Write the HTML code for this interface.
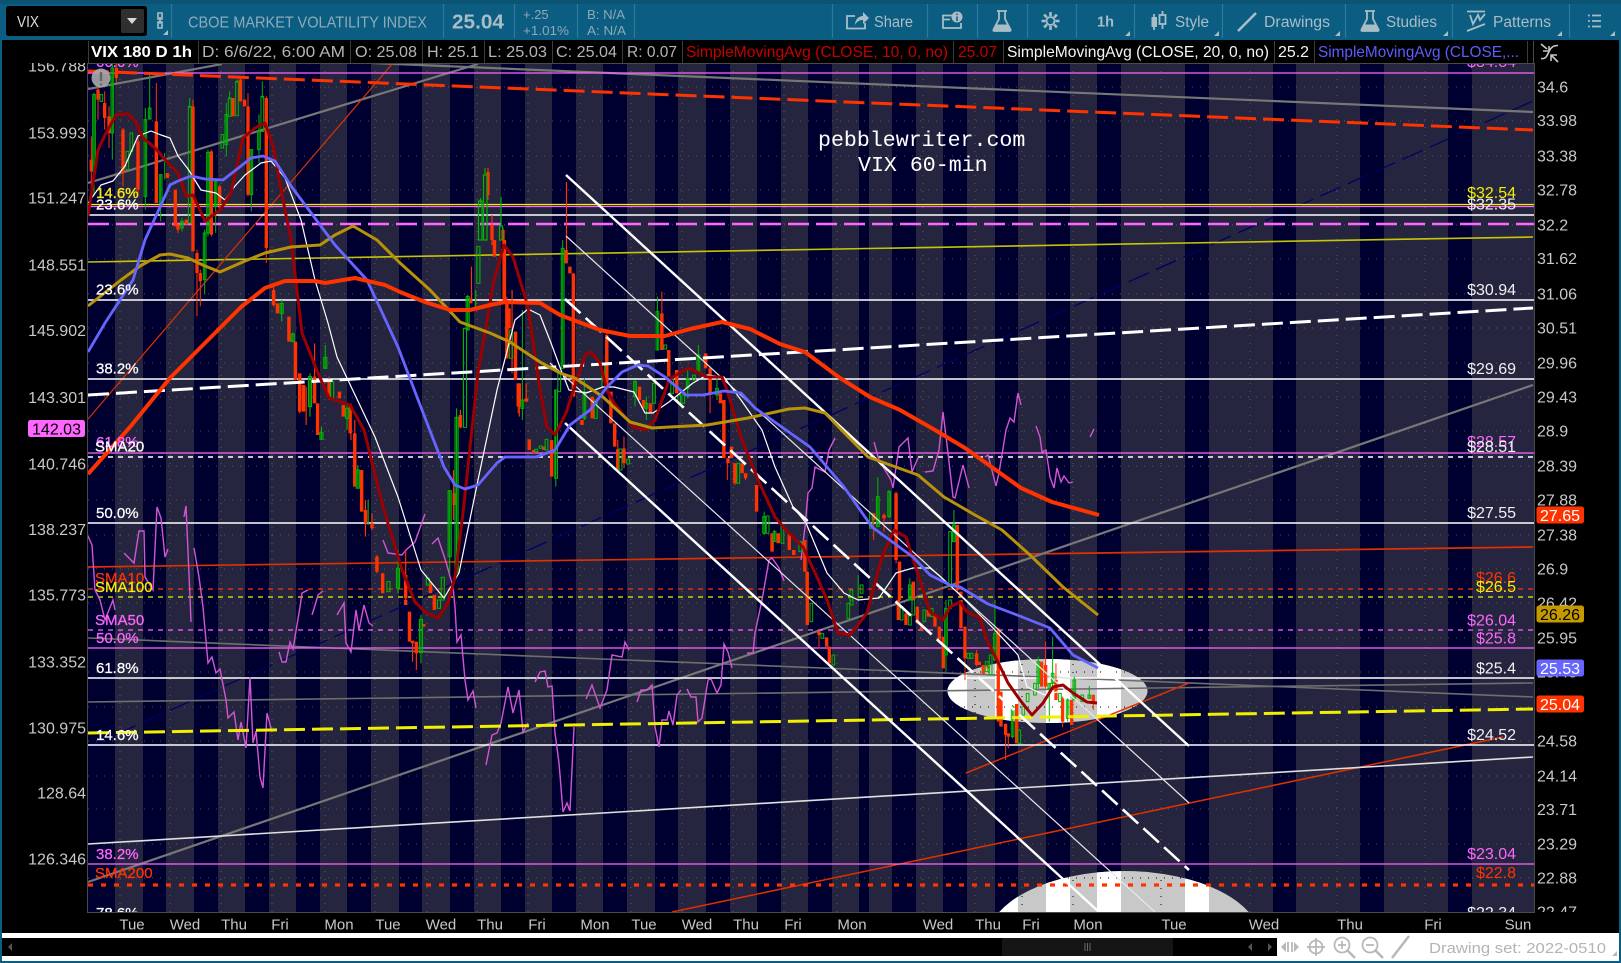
<!DOCTYPE html>
<html><head><meta charset="utf-8"><title>VIX</title>
<style>
html,body{margin:0;padding:0;background:#000;width:1621px;height:963px;overflow:hidden}
svg{display:block}
text{font-family:"Liberation Sans",sans-serif}
.ax{font-size:16px;fill:#c8c8c8}
.t{font-size:15px;fill:#c8c8c8}
.fw{font-size:15px;fill:#fff;stroke:#fff;stroke-width:.25}.fp{font-size:15px;fill:#ff66ff;stroke:#ff66ff;stroke-width:.25}.fy{font-size:15px;fill:#f0f000;stroke:#f0f000;stroke-width:.25}.fr{font-size:15px;fill:#ff3300;stroke:#ff3300;stroke-width:.25}
.dw{font-size:16px;fill:#f0f0f0;text-anchor:end}.dp{font-size:16px;fill:#ff66ff;text-anchor:end}.dy{font-size:16px;fill:#f0f000;text-anchor:end}.dr{font-size:16px;fill:#ff3300;text-anchor:end}
.h{font-size:15.8px;fill:#b4b4b4}
.tb{font-size:15.5px;fill:#a9bdc7}
.m{font-family:"Liberation Mono",monospace;font-size:21.6px;fill:#fff}
.box{font-size:16px}
</style></head><body>
<svg width="1621" height="963" viewBox="0 0 1621 963" xmlns="http://www.w3.org/2000/svg">
<defs>
<path id="db" d="M88 63h27v849h-27zM143 63h23v849h-23zM194 63h24v849h-24zM245 63h24v849h-24zM296 63h24v849h-24zM347 63h24v849h-24zM399 63h23v849h-23zM450 63h24v849h-24zM501 63h24v849h-24zM552 63h24v849h-24zM603 63h24v849h-24zM655 63h23v849h-23zM706 63h24v849h-24zM757 63h24v849h-24zM808 63h24v849h-24zM859 63h10v849h-10zM892 63h24v849h-24zM943 63h24v849h-24zM995 63h23v849h-23zM1046 63h24v849h-24zM1097 63h24v849h-24zM1185 63h24v849h-24zM1273 63h23v849h-23zM1360 63h24v849h-24zM1448 63h24v849h-24z"/>
<clipPath id="pl"><rect x="88" y="63" width="1446" height="849"/></clipPath>
<clipPath id="el"><ellipse cx="1047.5" cy="691" rx="100" ry="32"/><ellipse cx="1124" cy="941" rx="137" ry="70"/></clipPath>
<clipPath id="rax"><rect x="1535" y="64" width="84" height="848"/></clipPath>
</defs>

<!-- frame -->
<rect width="1621" height="963" fill="#0b5d82"/>
<rect x="2" y="40" width="1617" height="893" fill="#000"/>

<!-- plot -->
<g clip-path="url(#pl)">
<rect x="88" y="63" width="1446" height="849" fill="#25253f"/>
<use href="#db" fill="#000030"/>
<!-- dotted grid -->
<path stroke="#8a8a70" stroke-opacity=".55" stroke-width="1" stroke-dasharray="1 7" fill="none" d="M88 87H1534M88 121H1534M88 156H1534M88 190H1534M88 225H1534M88 259H1534M88 294H1534M88 328H1534M88 363H1534M88 397H1534M88 431H1534M88 466H1534M88 500H1534M88 535H1534M88 569H1534M88 603H1534M88 638H1534M88 672H1534M88 707H1534M88 741H1534M88 776H1534M88 809H1534M88 844H1534M88 878H1534M120 63V912M170 63V912M221 63V912M272 63V912M325 63V912M375 63V912M427 63V912M477 63V912M528 63V912M580 63V912M631 63V912M682 63V912M733 63V912M784 63V912M837 63V912M923 63V912M975 63V912M1022 63V912M1073 63V912M1161 63V912M1250 63V912M1337 63V912M1425 63V912"/>
<!-- ellipses -->
<g clip-path="url(#el)">
<rect x="900" y="640" width="400" height="280" fill="#c8c8c8"/>
<use href="#db" fill="#fff"/>
<path stroke="#000" stroke-width="1" stroke-dasharray="1 7" fill="none" d="M900 672H1200M900 707H1200M900 878H1300M975 640V920M1022 640V920M1073 640V920M1161 640V920"/>
</g>
<!-- thin sloped lines -->
<g fill="none">
<path d="M88 747L1533 101" stroke="#000066" stroke-width="1.3" stroke-dasharray="22 8"/>
<path d="M88 262L1533 237" stroke="#d8d800" stroke-width="1.6" stroke-opacity=".9"/>
<path d="M88 567L1533 547" stroke="#e03000" stroke-width="1.7"/>
<path d="M88 638L1533 697" stroke="#6e6e6e" stroke-width="1.6"/>
<path d="M88 702L1533 683" stroke="#6e6e6e" stroke-width="1.6"/>
<path d="M372 63L1533 112" stroke="#777" stroke-width="2.2"/>
<path d="M88 89L222 64" stroke="#777" stroke-width="2.2"/>
<path d="M88 183L478 64" stroke="#777" stroke-width="2.2"/>
<path d="M88 882L1533 385" stroke="#777" stroke-width="2.2"/>
<path d="M88 419L393 63" stroke="#e03000" stroke-width="1.2"/>
<path d="M672 912L1503 737" stroke="#e03000" stroke-width="1.5"/>
<path d="M966 773L1189 683" stroke="#e03000" stroke-width="1.5"/>
<path d="M88 844L1533 757" stroke="#e0e0e0" stroke-width="1.6"/>
</g>
<!-- horizontals -->
<g fill="none">
<path stroke="#ff66ff" stroke-width="1.2" d="M88 73H1534M88 206.5H1534M88 453H1534M88 648H1534M88 864H1534"/>
<path stroke="#f0f000" stroke-width="1.2" d="M88 204.5H1534"/>
<path stroke="#fff" stroke-width="1.4" d="M88 215H1534M88 300H1534M88 379H1534M88 523H1534M88 678H1534M88 745H1534"/>
<path stroke="#ff66ff" stroke-width="2.4" stroke-dasharray="21 7" d="M88 224H1534"/>
<path stroke="#fff" stroke-width="1.4" stroke-dasharray="5 5" d="M88 457H1534"/>
<path stroke="#ff3300" stroke-width="1.3" stroke-dasharray="5 5" d="M88 589H1534"/>
<path stroke="#f0f000" stroke-width="1.3" stroke-dasharray="5 5" d="M88 597H1534"/>
<path stroke="#ff66ff" stroke-width="1.3" stroke-dasharray="5 5" d="M88 630H1534"/>
<path stroke="#ff3300" stroke-width="3.2" stroke-dasharray="5 8" d="M88 885H1534"/>
</g>
<!-- pink study -->
<path fill="none" stroke="#d455d4" stroke-width="1.4" d="M88 536L92 545L95 590L100 600L105 620L113 600L115 610M124 553L134 563L139 531L144 531L145 577L153 590L157 507L161 518L165 557L168 549M184 517L186 506L190 597L191 622M194 548L199 577L203 607L208 663L212 657L216 673L220 669L226 700L228 718L234 712L238 740L241 722L246 748L250 677L253 743L256 731L260 777L263 788L267 713L272 732M279 652L282 662L286 662L290 642L293 649L300 607L302 593L308 590M312 615L316 602L318 595L323 591M337 615L344 603L346 643L351 652L356 610L359 630L364 605L369 623L373 626M383 540L388 553L402 555L406 550L415 542L425 514M432 544L438 538L446 562L453 587L455 607L457 642L461 635L465 680L468 700L473 691L476 708M486 765L492 735L497 733L501 723L508 687L513 713L519 690L523 732L528 723M535 682L540 672L545 671L548 687L552 686L555 733L559 763L563 812L567 803L570 811L574 727M586 699L592 685L600 708L607 690L612 655L622 657L625 642L629 650M637 702L641 690L647 690L652 685L655 727L659 747L662 720L667 720L669 711L673 725L677 695L681 690M687 689L691 697L696 697L698 722L702 718L708 680L711 679L717 693L721 685L724 644L728 652L732 668M747 653L753 653L755 633L762 600L769 560L772 558L779 568L784 581M801 560L805 527L808 493L812 488L815 467L825 472L829 450L835 438M874 442L879 460L891 480L893 488L899 447L908 438L912 472L918 458M925 472L933 471L939 450L943 412L948 453L953 497L955 498L963 465L969 488M985 457L988 455L996 486L999 473L1006 430L1010 418L1014 422L1018 393L1021 405M1036 426L1040 437L1042 452L1046 450L1050 477L1054 488L1057 468L1061 482L1064 476L1069 483L1073 482M1090 437L1094 429"/>
<!-- candles: upper gap -->
<g fill="none">
<path stroke="#ff3300" stroke-width="1.2" d="M566.500 182V250M488 168V200M503 228V245M492 215V245"/>
<path stroke="#ff3300" stroke-width="3.300" d="M488 172V195M492 225V240M503 230V240"/>
<path stroke="#00b400" stroke-width="1.200" d="M485 168V175M501 197V226M480.500 198V203M483.500 175h3.500V240h-3.500zM478.500 201h3.500V240h-3.500zM499.500 226h3V240h-3z"/>
</g>
<!-- candles: top-left -->
<g transform="translate(88,63) scale(.3333)" fill="none">
<path stroke="#ff3300" stroke-width="3" d="M10 220V390M30 60V170M50 85V200M63 130V255M85 0V60M105 195V370M150 215V400M270 480V510M315 110V130M327 560V760M337 620V730M370 260V520M395 365V440M457 40V115M480 90V400M535 100V600M205 60V180"/>
<path stroke="#ff3300" stroke-width="10" d="M10 290V325M30 80V110M50 120V165M63 160V210M85 15V45M105 200V330M150 235V380M205 175V420M238 330V345M262 380V490M270 485V500M295 470V485M315 130V565M327 570V630M337 630V655M370 265V515M395 370V420M435 105V160M457 50V115M470 110V130M480 130V395M535 105V555M548 560V568"/>
<path stroke="#00b400" stroke-width="3" d="M18 90V400M73 0V290M172 135V440M185 30V170M218 335V475M230 270V350M350 500V695M360 260V520M383 350V510M415 120V280M425 85V110M447 50V60M490 260V445M523 55V105M513 155V300M305 105V135M282 465V505M14 95h8V325h-8zM36 95h8V115h-8zM69 15h8V210h-8zM114 265h8V320h-8zM126 210h8V265h-8zM168 170h8V400h-8zM181 135h8V168h-8zM214 335h8V420h-8zM278 475h8V495h-8zM301 130h8V480h-8zM346 510h8V650h-8zM356 268h8V510h-8zM379 355h8V430h-8zM399 215h8V255h-8zM411 155h8V245h-8zM421 105h8V160h-8zM443 55h8V158h-8zM486 260h8V395h-8zM509 205h8V260h-8zM519 100h8V205h-8z"/>
</g>
<!-- candles: left mid -->
<g transform="translate(0,240) scale(.3827 .3333)" fill="none">
<path stroke="#ff3300" stroke-width="3" d="M715 130V200M783 400V520M800 440V555M822 310V490M860 410V480M917 490V600M927 540V740M955 780V890M972 820V870M985 945V1000M1060 930V1080M1185 690V840M1203 510V565M1232 80V180M1318 0V190M1338 150V400M1357 430V530M1375 430V485M1440 600V710"/>
<path stroke="#ff3300" stroke-width="9" d="M715 150V195M725 190V220M755 230V305M772 305V420M783 400V515M793 435V515M822 410V490M830 490V585M860 420V475M887 455V475M897 495V530M915 500V580M927 580V740M945 690V815M955 810V850M972 850V865M985 950V995M1000 1000V1060M1060 1005V1075M1125 1030V1060M1135 1065V1080M1187 760V795M1203 525V562M1230 175V190M1292 0V50M1318 0V190M1330 205V265M1347 275V420M1357 430V500M1375 475V485"/>
<path stroke="#00b400" stroke-width="3" d="M736 180V245M765 278V305M810 400V530M850 315V385M840 560V598M907 495V570M935 675V745M962 780V855M1040 930V1060M1175 752V1000M1193 505V1000M1222 165V270M1243 150V210M732 190h8V220h-8zM761 282h8V305h-8zM806 410h8V500h-8zM846 352h8V385h-8zM836 578h8V598h-8zM864 425h8V475h-8zM903 505h8V535h-8zM931 690h8V745h-8zM1011 1025h8V1055h-8zM1036 985h8V1045h-8zM1114 1015h8V1035h-8zM1153 1012h8V1080h-8zM1171 752h8V950h-8zM1189 532h8V1000h-8zM1211 265h8V562h-8zM1218 170h8V270h-8zM1246 20h8V130h-8z"/>
</g>
<g transform="translate(0,600) scale(.3827 .3333)" fill="none">
<path stroke="#ff3300" stroke-width="3" d="M1078 130V185M1088 130V210"/>
<path stroke="#ff3300" stroke-width="9" d="M1060 0V15M1070 35V125M1078 122V130M1088 125V160M1107 72V80M1135 0V30"/>
<path stroke="#00b400" stroke-width="3" d="M1100 45V190M1096 58h8V158h-8zM1143 0h8V25h-8z"/>
</g>
<!-- candles: center -->
<g transform="translate(500,240) scale(.3444 .3333)" fill="none">
<path stroke="#ff3300" stroke-width="3" d="M20 170V355M53 430V520M310 280V450M342 600V690M360 590V685M470 155V330M610 380V520M660 655V720M682 670V735M713 700V720M1085 820V900M1115 820V875M1150 755V970M1328 855V1060"/>
<path stroke="#ff3300" stroke-width="10" d="M12 0V175M20 190V355M53 430V500M77 475V485M85 598V630M98 630V640M128 620V630M150 600V710M192 30V70M203 80V100M213 100V470M238 540V555M268 470V535M310 285V450M322 455V550M333 550V620M342 628V690M360 625V670M405 440V480M417 480V505M437 490V520M470 220V330M490 330V410M513 390V460M597 340V385M610 385V460M640 460V490M650 480V655M662 655V670M672 620V655M682 670V730M703 670V700M713 700V715M745 735V815M790 880V935M808 880V910M840 880V930M853 930V945M885 900V995M892 995V1080M1085 820V840M1115 825V835M1150 760V960M1160 965V1080M1200 1025V1080M1328 855V1050M1338 1055V1070"/>
<path stroke="#00b400" stroke-width="3" d="M65 210V540M162 450V740M182 0V380M245 415V540M392 420V500M425 470V540M457 170V330M545 385V475M576 315V395M630 415V480M767 815V885M797 870V905M1040 1005V1080M1097 712V860M1130 750V835M1318 810V905M1190 1015V1080M28 270h8V355h-8zM61 480h8V505h-8zM101 628h8V635h-8zM114 618h8V625h-8zM131 598h8V630h-8zM159 450h8V715h-8zM168 395h8V455h-8zM178 25h8V385h-8zM241 455h8V535h-8zM274 480h8V535h-8zM296 375h8V440h-8zM346 627h8V690h-8zM368 658h8V672h-8zM388 425h8V470h-8zM421 490h8V505h-8zM443 430h8V490h-8zM453 215h8V330h-8zM476 315h8V327h-8zM496 415h8V460h-8zM516 465h8V490h-8zM528 465h8V490h-8zM541 415h8V445h-8zM559 405h8V420h-8zM572 345h8V395h-8zM626 445h8V465h-8zM688 670h8V730h-8zM763 830h8V880h-8zM773 828h8V880h-8zM793 875h8V905h-8zM816 858h8V910h-8zM868 905h8V935h-8zM1016 1050h8V1080h-8zM1046 1035h8V1060h-8zM1073 820h8V865h-8zM1093 770h8V860h-8zM1126 755h8V830h-8zM1186 1035h8V1080h-8zM1303 875h8V1040h-8zM1314 855h8V905h-8z"/>
</g>
<g transform="translate(600,600) scale(.3333)" fill="none">
<path stroke="#ff3300" stroke-width="3" d="M657 90V145M1095 80V240M1130 150V200M1217 370V480M1225 400V445M1337 125V265M1368 190V300M1388 290V382M1480 283V330"/>
<path stroke="#ff3300" stroke-width="10" d="M622 0V75M657 95V105M680 112V140M688 140V190M895 0V60M918 40V75M952 20V70M965 80V90M985 30V50M1005 45V80M1018 80V118M1030 110V205M1083 0V85M1095 80V175M1130 160V195M1138 185V195M1150 195V222M1165 197V205M1195 85V365M1203 275V380M1217 372V405M1225 400V410M1250 312V430M1325 185V260M1337 195V260M1368 240V300M1388 295V365M1415 300V375M1480 285V310"/>
<path stroke="#00b400" stroke-width="3" d="M1038 0V215M1185 0V180M1358 110V265M1423 230V300M1468 258V295M1315 170V265M1348 250V365M1403 295V365M1238 315V415M630 10h8V65h-8zM663 100h8V115h-8zM696 165h8V195h-8zM741 10h8V55h-8zM751 0h8V15h-8zM901 20h8V60h-8zM926 45h8V75h-8zM936 0h8V45h-8zM969 30h8V65h-8zM991 25h8V50h-8zM1034 25h8V165h-8zM1046 0h8V25h-8zM1101 160h8V175h-8zM1111 160h8V175h-8zM1156 185h8V215h-8zM1168 165h8V225h-8zM1181 100h8V180h-8zM1234 320h8V410h-8zM1254 390h8V430h-8zM1266 320h8V345h-8zM1279 280h8V305h-8zM1301 250h8V285h-8zM1311 185h8V250h-8zM1344 250h8V265h-8zM1354 220h8V250h-8zM1376 280h8V305h-8zM1399 300h8V355h-8zM1419 240h8V300h-8zM1443 285h8V305h-8zM1464 285h8V295h-8z"/>
</g>
<!-- thick sloped lines -->
<g fill="none">
<path d="M88 71L1533 130" stroke="#ff3300" stroke-width="3" stroke-dasharray="21 7"/>
<path d="M88 395L1533 308" stroke="#fff" stroke-width="3" stroke-dasharray="21 7"/>
<path d="M88 733L1533 709" stroke="#f0f000" stroke-width="3" stroke-dasharray="21 7"/>
<path d="M566 175L1189 746" stroke="#fff" stroke-width="2.4"/>
<path d="M565 299L1189 870" stroke="#fff" stroke-width="2.6" stroke-dasharray="21 7"/>
<path d="M565 423L1099 912" stroke="#fff" stroke-width="2.4"/>
<path d="M566 236L1189 803" stroke="#e8e8e8" stroke-width="1.2"/>
<path d="M550 363L1155 912" stroke="#e8e8e8" stroke-width="1.2"/>
</g>
<!-- moving averages -->
<g fill="none" stroke-linejoin="round">
<path stroke="#fff" stroke-width="1.2" d="M88 203L101 185L113 181L125 166L138 136L151 131L161 135L170 138L178 156L188 169L201 190L216 193L225 200L235 186L245 175L261 163L271 161L285 178L301 220L315 280L328 323L337 357L375 437L398 497L421 570L444 598L459 573L478 480L497 390L515 320L528 309L540 315L551 343L561 370L569 390L586 393L603 387L614 387L634 392L645 413L653 413L669 402L693 383L707 375L724 377L741 400L762 430L775 467L793 507L806 523L827 573L844 593L858 600L879 598L896 573L913 568L930 568L941 577L958 593L975 610L993 628L1018 655L1027 687L1045 695L1065 690L1085 700L1098 703"/>
<path stroke="#9c0000" stroke-width="3" d="M88 216L98 150L105 135L116 115L128 114L135 121L143 138L155 148L168 163L178 173L186 196L193 195L205 221L220 210L231 193L243 138L255 128L265 123L273 146L285 210L291 240L302 333L318 373L329 398L350 405L364 430L383 507L402 570L415 602L425 612L438 618L448 603L455 577L463 513L478 373L494 280L504 245L513 257L528 307L540 390L547 427L555 435L566 413L585 355L591 352L600 363L607 390L614 403L633 427L645 430L655 420L669 380L679 373L689 368L707 377L722 377L727 390L741 437L758 480L775 517L786 530L803 547L817 577L827 600L838 633L850 635L867 613L882 557L894 530L906 537L930 612L943 620L950 607L960 602L967 612L980 618L987 640L997 660L1008 683L1020 700L1032 715L1043 703L1053 687L1063 685L1073 693L1087 702L1097 703"/>
<path stroke="#b8920a" stroke-width="3" d="M88 306L121 280L140 266L160 255L170 254L188 258L205 266L220 272L245 261L265 253L291 247L320 245L335 235L353 226L377 240L400 263L430 290L460 322L490 333L510 342L540 362L560 373L575 378L603 397L630 422L652 428L707 425L748 418L789 409L805 408L825 413L868 457L918 475L944 497L975 515L1002 530L1030 555L1063 587L1098 615"/>
<path stroke="#6666ff" stroke-width="2.8" d="M88 352L105 323L133 280L145 240L170 185L178 181L191 176L205 179L223 180L241 166L251 158L263 156L275 161L291 186L335 245L367 280L398 347L417 397L444 467L455 485L465 489L478 485L497 463L505 457L536 457L555 450L570 425L590 410L607 387L622 372L638 365L648 366L665 377L686 395L703 395L724 391L741 393L755 408L786 430L810 447L844 487L872 527L913 557L930 575L950 585L960 587L988 604L1017 615L1050 628L1073 655L1098 668"/>
<path stroke="#ff3300" stroke-width="4" d="M88 474L130 427L170 378L241 307L265 288L285 281L315 281L325 283L355 278L385 285L400 292L425 302L450 310L470 310L490 305L505 302L540 303L560 315L600 330L630 336L665 336L690 329L722 322L750 329L780 344L805 352L840 378L870 397L900 410L935 430L965 448L1000 473L1021 488L1052 502L1099 515"/>
</g>
<!-- alert circle -->
<circle cx="101" cy="78" r="9.5" fill="#aaa" fill-opacity=".9"/>
<path d="M101 72V81M101 83.5V85.5" stroke="#666" stroke-width="2.4"/>
<!-- watermark -->
<text x="818" y="146" class="m">pebblewriter.com</text>
<text x="858" y="171" class="m">VIX 60-min</text>
<!-- fib labels left -->
<text x="96" y="67" class="fp">66.6%</text>
<text x="96" y="198" class="fp">14.6%</text><text x="96" y="198" class="fy">14.6%</text>
<text x="96" y="209.5" class="fw">23.6%</text>
<text x="96" y="294.5" class="fw">23.6%</text>
<text x="96" y="373.5" class="fw">38.2%</text>
<text x="96" y="447" class="fp">61.8%</text>
<text x="95" y="451.5" class="fw">SMA20</text>
<text x="96" y="518" class="fw">50.0%</text>
<text x="95" y="583" class="fr">SMA10</text>
<text x="95" y="592" class="fy">SMA100</text>
<text x="95" y="625" class="fp">SMA50</text>
<text x="96" y="643" class="fp">50.0%</text>
<text x="96" y="673" class="fw">61.8%</text>
<text x="96" y="740" class="fw">14.6%</text>
<text x="96" y="859" class="fp">38.2%</text>
<text x="95" y="878" class="fr">SMA200</text>
<text x="96" y="918" class="fw">78.6%</text>
<!-- $ labels right -->
<text x="1516" y="67" class="dp">$34.84</text>
<text x="1516" y="198" class="dy">$32.54</text>
<text x="1516" y="209.5" class="dw">$32.35</text>
<text x="1516" y="295" class="dw">$30.94</text>
<text x="1516" y="374" class="dw">$29.69</text>
<text x="1516" y="447" class="dp">$28.57</text>
<text x="1516" y="452" class="dw">$28.51</text>
<text x="1516" y="518" class="dw">$27.55</text>
<text x="1516" y="583" class="dr">$26.6</text>
<text x="1516" y="592" class="dy">$26.5</text>
<text x="1516" y="625.5" class="dp">$26.04</text>
<text x="1516" y="643.5" class="dp">$25.8</text>
<text x="1516" y="673.5" class="dw">$25.4</text>
<text x="1516" y="740" class="dw">$24.52</text>
<text x="1516" y="859" class="dp">$23.04</text>
<text x="1516" y="878" class="dr">$22.8</text>
<text x="1516" y="918" class="dw">$22.34</text>
</g>
<!-- plot borders -->
<path d="M87.5 63V912.5H1534.5V63" stroke="#4a4a4a" stroke-width="1" fill="none"/>

<!-- left axis -->
<g class="ax" text-anchor="end">
<text x="86" y="71.5" class="ax">156.788</text>
<text x="86" y="138.5" class="ax">153.993</text>
<text x="86" y="203.5" class="ax">151.247</text>
<text x="86" y="270.5" class="ax">148.551</text>
<text x="86" y="336" class="ax">145.902</text>
<text x="86" y="403" class="ax">143.301</text>
<text x="86" y="469.5" class="ax">140.746</text>
<text x="86" y="535" class="ax">138.237</text>
<text x="86" y="600.5" class="ax">135.773</text>
<text x="86" y="667.5" class="ax">133.352</text>
<text x="86" y="733.5" class="ax">130.975</text>
<text x="86" y="798.5" class="ax">128.64</text>
<text x="86" y="864.5" class="ax">126.346</text>
</g>
<rect x="28" y="420" width="57" height="17" rx="2.5" fill="#ff66ff"/>
<text x="56.5" y="434.5" text-anchor="middle" class="box" fill="#000">142.03</text>

<!-- right axis -->
<g clip-path="url(#rax)">
<text x="1537" y="92.5" class="ax">34.6</text>
<text x="1537" y="126" class="ax">33.98</text>
<text x="1537" y="161.5" class="ax">33.38</text>
<text x="1537" y="195.5" class="ax">32.78</text>
<text x="1537" y="230.5" class="ax">32.2</text>
<text x="1537" y="264" class="ax">31.62</text>
<text x="1537" y="299.5" class="ax">31.06</text>
<text x="1537" y="333.5" class="ax">30.51</text>
<text x="1537" y="368.5" class="ax">29.96</text>
<text x="1537" y="402.5" class="ax">29.43</text>
<text x="1537" y="436.5" class="ax">28.9</text>
<text x="1537" y="471.5" class="ax">28.39</text>
<text x="1537" y="505.5" class="ax">27.88</text>
<text x="1537" y="540.5" class="ax">27.38</text>
<text x="1537" y="574.5" class="ax">26.9</text>
<text x="1537" y="608.5" class="ax">26.42</text>
<text x="1537" y="643.5" class="ax">25.95</text>
<text x="1537" y="677.5" class="ax">25.48</text>
<text x="1537" y="746.5" class="ax">24.58</text>
<text x="1537" y="781.5" class="ax">24.14</text>
<text x="1537" y="815" class="ax">23.71</text>
<text x="1537" y="849.5" class="ax">23.29</text>
<text x="1537" y="883.5" class="ax">22.88</text>
<text x="1537" y="917.5" class="ax">22.47</text>
</g>
<rect x="1536.5" y="506.5" width="47.5" height="17" rx="2.5" fill="#ff3300"/><text x="1540" y="521" class="box" fill="#fff">27.65</text>
<rect x="1536.5" y="605.5" width="47.5" height="17" rx="2.5" fill="#c49a00"/><text x="1540" y="620" class="box" fill="#000">26.26</text>
<rect x="1536.5" y="659.5" width="47.5" height="17" rx="2.5" fill="#6666ff"/><text x="1540" y="674" class="box" fill="#fff">25.53</text>
<rect x="1536.5" y="695.5" width="47.5" height="17" rx="2.5" fill="#ff3300"/><text x="1540" y="710" class="box" fill="#fff">25.04</text>

<!-- time axis -->
<g text-anchor="middle">
<text x="132" y="929.5" class="t">Tue</text><text x="185" y="929.5" class="t">Wed</text><text x="234" y="929.5" class="t">Thu</text><text x="280" y="929.5" class="t">Fri</text><text x="339" y="929.5" class="t">Mon</text><text x="388" y="929.5" class="t">Tue</text><text x="441" y="929.5" class="t">Wed</text><text x="490" y="929.5" class="t">Thu</text><text x="537" y="929.5" class="t">Fri</text><text x="595" y="929.5" class="t">Mon</text><text x="644" y="929.5" class="t">Tue</text><text x="697" y="929.5" class="t">Wed</text><text x="746" y="929.5" class="t">Thu</text><text x="793" y="929.5" class="t">Fri</text><text x="852" y="929.5" class="t">Mon</text><text x="938" y="929.5" class="t">Wed</text><text x="988" y="929.5" class="t">Thu</text><text x="1031" y="929.5" class="t">Fri</text><text x="1088" y="929.5" class="t">Mon</text><text x="1174" y="929.5" class="t">Tue</text><text x="1264" y="929.5" class="t">Wed</text><text x="1350" y="929.5" class="t">Thu</text><text x="1433" y="929.5" class="t">Fri</text><text x="1518" y="929.5" class="t">Sun</text>
</g>

<!-- legend header -->
<rect x="2" y="40" width="1617" height="23" fill="#000"/>
<path d="M88 63.5H1533.5V41" stroke="#4a4a4a" fill="none"/>
<path d="M88.5 41V63M198.5 41V63M350.5 41V63M422.5 41V63M484.5 41V63M552.5 41V63M622.5 41V63M682.5 41V63M953.5 41V63M1003.5 41V63M1274.5 41V63M1314.5 41V63M1527.5 41V63" stroke="#3c3c3c"/>
<text x="91" y="57" font-weight="bold" font-size="15.8" fill="#fff" textLength="101" lengthAdjust="spacingAndGlyphs">VIX 180 D 1h</text>
<text x="202" y="57" class="h" textLength="143" lengthAdjust="spacingAndGlyphs">D: 6/6/22, 6:00 AM</text>
<text x="355" y="57" class="h" textLength="62" lengthAdjust="spacingAndGlyphs">O: 25.08</text>
<text x="427" y="57" class="h" textLength="52" lengthAdjust="spacingAndGlyphs">H: 25.1</text>
<text x="488" y="57" class="h" textLength="59" lengthAdjust="spacingAndGlyphs">L: 25.03</text>
<text x="556" y="57" class="h" textLength="61" lengthAdjust="spacingAndGlyphs">C: 25.04</text>
<text x="627" y="57" class="h" textLength="50" lengthAdjust="spacingAndGlyphs">R: 0.07</text>
<text x="686" y="57" font-size="15.8" fill="#c40000" textLength="262" lengthAdjust="spacingAndGlyphs">SimpleMovingAvg (CLOSE, 10, 0, no)</text>
<text x="958" y="57" font-size="15.8" fill="#c40000" textLength="39" lengthAdjust="spacingAndGlyphs">25.07</text>
<text x="1007" y="57" font-size="15.8" fill="#f4f4f4" textLength="262" lengthAdjust="spacingAndGlyphs">SimpleMovingAvg (CLOSE, 20, 0, no)</text>
<text x="1278" y="57" font-size="15.8" fill="#f4f4f4" textLength="31" lengthAdjust="spacingAndGlyphs">25.2</text>
<text x="1318" y="57" font-size="15.8" fill="#5c5cff" textLength="201" lengthAdjust="spacingAndGlyphs">SimpleMovingAvg (CLOSE,...</text>
<g fill="none" stroke="#c8c8c8" stroke-width="1.6">
<path d="M1541 58.5c5 1 6-3 8-7s4-6 9-6"/>
<path d="M1541 44l6 5M1549 46v5h-6" />
<path d="M1558 62l-6-6M1551 61v-6h6"/>
</g>

<!-- toolbar -->
<rect x="0" y="0" width="1621" height="4" fill="#0a5373"/>
<path d="M171.5 4V38M443.5 4V38M514.5 4V38M577.5 4V38M634.5 4V38M832.5 4V38M927.5 4V38M977.5 4V38M1027.5 4V38M1076.5 4V38M1134.5 4V38M1222.5 4V38M1345.5 4V38M1452.5 4V38M1569.5 4V38" stroke="#2a7a9c" stroke-width="1.2"/>
<rect x="6" y="6" width="141" height="30" rx="2.5" fill="#000"/>
<rect x="121" y="9" width="23" height="24" rx="2" fill="#2f2f2f"/>
<path d="M127 18h10l-5 6z" fill="#d8d8d8"/>
<text x="17" y="27" font-size="15.5" fill="#dcdcdc" textLength="22" lengthAdjust="spacingAndGlyphs">VIX</text>
<path d="M158 13h4v6h-4zM158 22h4v6h-4zM160 17v7" fill="none" stroke="#a9bdc7" stroke-width="1.6"/>
<path d="M168 30v5h-5z" fill="#a9bdc7"/>
<text x="188" y="27.5" class="tb" fill-opacity=".82" textLength="239" lengthAdjust="spacingAndGlyphs">CBOE MARKET VOLATILITY INDEX</text>
<text x="452" y="28.5" font-size="20.5" font-weight="bold" fill="#a9bdc7" textLength="52" lengthAdjust="spacingAndGlyphs">25.04</text>
<text x="523" y="19" font-size="13" fill="#8fa9b6">+.25</text>
<text x="523" y="35" font-size="13" fill="#8fa9b6" textLength="46" lengthAdjust="spacingAndGlyphs">+1.01%</text>
<text x="587" y="19" font-size="13" fill="#8fa9b6" textLength="38" lengthAdjust="spacingAndGlyphs">B: N/A</text>
<text x="587" y="35" font-size="13" fill="#8fa9b6" textLength="39" lengthAdjust="spacingAndGlyphs">A: N/A</text>
<text x="874" y="27" class="tb" textLength="39" lengthAdjust="spacingAndGlyphs">Share</text>
<text x="1097" y="26.5" font-size="14.5" font-weight="bold" fill="#a9bdc7">1h</text>
<text x="1175" y="27" class="tb" textLength="34" lengthAdjust="spacingAndGlyphs">Style</text>
<text x="1264" y="27" class="tb" textLength="66" lengthAdjust="spacingAndGlyphs">Drawings</text>
<text x="1386" y="27" class="tb" textLength="51" lengthAdjust="spacingAndGlyphs">Studies</text>
<text x="1493" y="27" class="tb" textLength="58" lengthAdjust="spacingAndGlyphs">Patterns</text>
<g fill="none" stroke="#a9bdc7" stroke-width="1.8">
<path d="M855 16H847V28.5H865V23"/>
<path d="M952 15.5H943V28H961V23M943 19.5H950"/>
<path d="M997 11h10M999 11v8l-5.5 10.5q-.7 1.5 1 1.5h15q1.7 0 1-1.500L1005 19v-8"/>
<circle cx="1050.500" cy="21" r="4"/>
<path stroke-width="2.600" d="M1050.500 12v4M1050.500 26v4M1041.500 21h4M1055.500 21h4M1044.100 14.600l2.800 2.800M1054.100 24.600l2.800 2.800M1044.100 27.400l2.800-2.800M1054.100 17.400l2.800-2.800"/>
<path d="M1154 14v16M1162.500 11v18"/>
<rect x="1159.500" y="15" width="6" height="9" fill="#0b5d82"/>
<path stroke-width="2.600" d="M1238 31L1256 13"/>
<path d="M1365 11h10M1367 11v8l-5.500 10.500q-.7 1.500 1 1.500h15q1.700 0 1-1.500L1373 19v-8"/>
<path d="M1467 11.500H1485M1470 15l3 9 5-9 2 5 5-6M1467 31l18-7"/>
<path d="M1592 15.500H1601M1592 21H1601M1592 26.500H1601M1588 15.500h1.800M1588 21h1.800M1588 26.500h1.800"/>
</g>
<g fill="#a9bdc7">
<path d="M857 25c0-6 4-9 8-9v-4l6 6-6 6v-4c-3 0-6 1-8 5z" transform="translate(-2,0)"/>
<circle cx="957" cy="17" r="5.500"/>
<path d="M996.500 24.500h11l3.500 6.500h-18zM1364.500 24.500h11l3.500 6.500h-18z"/>
<rect x="1151.500" y="17" width="5.500" height="10"/>
<path d="M1125 36h5v-5zM1214 36h5v-5zM1335 36h5v-5zM1443 36h5v-5zM1557 36h5v-5zM1610 36h5v-5z"/>
</g>
<path d="M957 13.500v1.500M957 16.500v4.500" stroke="#0b5d82" stroke-width="1.500"/>

<!-- bottom bar -->
<rect x="2" y="933" width="1617" height="28" fill="#fff"/>
<rect x="2" y="938" width="1275" height="18" fill="#000"/>
<rect x="1002" y="938" width="171" height="18" fill="#151515"/>
<path d="M1085 943v8M1087.500 943v8M1090 943v8" stroke="#666" stroke-width="1"/>
<path d="M12 943v8l-4-4zM1268 943v8l4-4z" fill="#555"/>
<path d="M1252 943v8l-4-4z" fill="#555"/>
<g fill="none" stroke="#b8b8b8" stroke-width="1.800">
<circle cx="1316" cy="947" r="6.500"/><path d="M1316 938v18M1307 947h18"/>
<circle cx="1342" cy="945" r="7.500"/><path stroke-width="2.500" d="M1347.500 950.500L1355 958"/><path d="M1338 945h8M1342 941v8"/>
<circle cx="1370" cy="945" r="7.500"/><path stroke-width="2.500" d="M1375.500 950.500L1383 958"/><path d="M1366 945h8"/>
<path stroke-width="2.500" d="M1392 958L1409 936"/>
<path d="M1288 942v10M1292 942v10"/>
</g>
<path d="M1281 947l5-5v10zM1299 947l-5-5v10z" fill="#b8b8b8"/>
<path d="M1612 956h5v-5z" fill="#b8b8b8"/>
<text x="1429" y="953" font-size="15" fill="#b4b4b4" textLength="177" lengthAdjust="spacingAndGlyphs">Drawing set: 2022-0510</text>
</svg>
</body></html>
